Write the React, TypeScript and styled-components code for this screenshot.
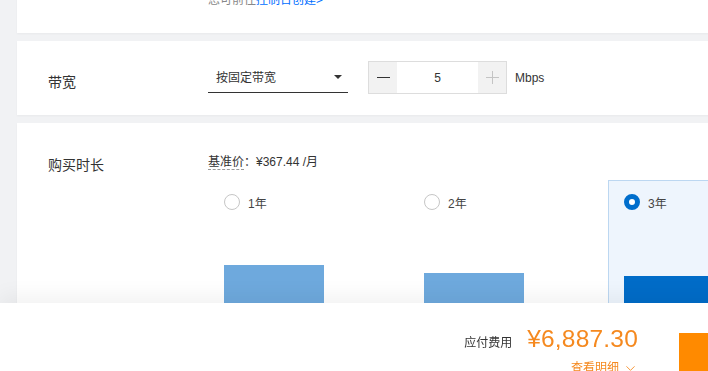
import React from 'react';
import styled, { createGlobalStyle } from 'styled-components';
import { ChevronDown } from 'lucide-react';

const GlobalStyle = createGlobalStyle`
  body {
    margin: 0;
    overflow: hidden;
    background: #f1f2f4;
    font-family: "Liberation Sans", "Noto Sans CJK SC", sans-serif;
    color: #333;
  }
`;

const durations = [
  { label: '1年', bar: 60, selected: false },
  { label: '2年', bar: 52, selected: false },
  { label: '3年', bar: 49, selected: true },
];

const App: React.FC = () => (
  <>
    <GlobalStyle />
    <Page>
      <Card>
        <Row>
          <Label />
          <Hint>
            您可前往<HintLink>控制台创建&gt;</HintLink>
          </Hint>
        </Row>
      </Card>

      <Card $padding="20px 0 21px">
        <Row>
          <Label $offset={11}>带宽</Label>
          <Controls>
            <Select>
              按固定带宽
              <Caret />
            </Select>
            <Stepper>
              <StepButton>
                <Minus />
              </StepButton>
              <StepValue>5</StepValue>
              <StepButton $disabled>
                <Plus />
              </StepButton>
            </Stepper>
            <Unit>Mbps</Unit>
          </Controls>
        </Row>
      </Card>

      <Card $padding="29px 0 0" $grow>
        <Row>
          <Label $offset={3}>购买时长</Label>
          <div>
            <BasePrice>
              <Dashed>基准价</Dashed>：¥367.44 /月
            </BasePrice>
            <Options>
              {durations.map((d) => (
                <Option key={d.label} $selected={d.selected}>
                  <RadioRow>
                    <Radio $checked={d.selected} />
                    {d.label}
                  </RadioRow>
                  <BarArea>
                    <Bar $selected={d.selected} style={{ height: d.bar }} />
                  </BarArea>
                </Option>
              ))}
            </Options>
          </div>
        </Row>
      </Card>
    </Page>

    <Footer>
      <PriceBlock>
        <PriceRow>
          <PriceLabel>应付费用</PriceLabel>
          <Price>¥6,887.30</Price>
        </PriceRow>
        <Detail>
          查看明细
          <ChevronDown size={15} strokeWidth={1.4} />
        </Detail>
      </PriceBlock>
      <BuyButton>立即购买</BuyButton>
    </Footer>
  </>
);

const Page = styled.div`
  width: 783px;
  height: 395px;
  margin-top: -10px;
  padding-left: 17px;
  display: flex;
  flex-direction: column;
  gap: 8px;
`;

const Card = styled.div<{ $padding?: string; $grow?: boolean }>`
  background: #fff;
  padding: ${({ $padding }) => $padding || '0 0 23px'};
  flex: ${({ $grow }) => ($grow ? 1 : 'none')};
  box-shadow: 0 1px 2px rgba(0, 0, 0, 0.04);
`;

const Row = styled.div`
  display: grid;
  grid-template-columns: 160px 1fr;
  padding-left: 31px;
`;

const Label = styled.div<{ $offset?: number }>`
  padding-top: ${({ $offset }) => $offset || 0}px;
  font-size: 14px;
  line-height: 20px;
  color: #333;
`;

const Hint = styled.div`
  font-size: 12px;
  line-height: 20px;
  color: #888;
`;

const HintLink = styled.span`
  color: #006eff;
`;

const Controls = styled.div`
  display: flex;
  align-items: center;
`;

const Select = styled.div`
  position: relative;
  width: 132px;
  height: 32px;
  padding-left: 8px;
  display: flex;
  align-items: center;
  border-bottom: 1px solid #333;
  font-size: 12px;
  margin-top: -2px;
`;

const Caret = styled.span`
  position: absolute;
  right: 6px;
  top: 15px;
  width: 0;
  height: 0;
  border-left: 4px solid transparent;
  border-right: 4px solid transparent;
  border-top: 4px solid #333;
`;

const Stepper = styled.div`
  display: flex;
  height: 31px;
  margin-left: 20px;
  border: 1px solid #ddd;
`;

const StepButton = styled.div<{ $disabled?: boolean }>`
  width: 28px;
  display: flex;
  align-items: center;
  justify-content: center;
  background: #f2f2f2;
  color: ${({ $disabled }) => ($disabled ? '#c4c4c4' : '#333')};
`;

const Minus = styled.span`
  width: 13px;
  height: 1.5px;
  background: currentColor;
`;

const Plus = styled.span`
  position: relative;
  width: 13px;
  height: 1px;
  background: currentColor;

  &::after {
    content: '';
    position: absolute;
    left: 6px;
    top: -6px;
    width: 1px;
    height: 13px;
    background: currentColor;
  }
`;

const StepValue = styled.div`
  width: 81px;
  display: flex;
  align-items: center;
  justify-content: center;
  font-size: 12px;
  color: #333;
  background: #fff;
`;

const Unit = styled.span`
  margin-left: 8px;
  font-size: 12px;
  color: #333;
`;

const BasePrice = styled.div`
  font-size: 12px;
  line-height: 20px;
  color: #333;
`;

const Dashed = styled.span`
  border-bottom: 1px dashed #999;
`;

const Options = styled.div`
  display: flex;
  margin-top: 8px;
`;

const Option = styled.div<{ $selected?: boolean }>`
  width: 200px;
  box-sizing: border-box;
  padding: 13px 15px 40px;
  border: 1px solid ${({ $selected }) => ($selected ? '#bcd7f1' : 'transparent')};
  border-right: none;
  background: ${({ $selected }) => ($selected ? '#eef5fd' : 'transparent')};
  flex: ${({ $selected }) => ($selected ? 1 : 'none')};
`;

const RadioRow = styled.div`
  display: flex;
  align-items: center;
  gap: 8px;
  height: 16px;
  font-size: 12px;
  color: #444;
`;

const Radio = styled.span<{ $checked?: boolean }>`
  width: 16px;
  height: 16px;
  box-sizing: border-box;
  border-radius: 50%;
  border: ${({ $checked }) => ($checked ? '5px solid #006ecc' : '1px solid #c6c6c6')};
  background: #fff;
`;

const BarArea = styled.div`
  height: 100px;
  margin-top: 15px;
  display: flex;
  align-items: flex-end;
`;

const Bar = styled.div<{ $selected?: boolean }>`
  width: 100px;
  background: ${({ $selected }) => ($selected ? '#006cc8' : '#6ea9dd')};
`;

const Footer = styled.div`
  position: fixed;
  left: 0;
  bottom: 0;
  width: 800px;
  height: 68px;
  background: #fff;
  display: flex;
  justify-content: flex-end;
  align-items: flex-start;
  box-shadow: 0 -6px 22px rgba(0, 0, 0, 0.06);
`;

const PriceBlock = styled.div`
  margin-top: 21px;
  display: flex;
  flex-direction: column;
  align-items: flex-end;
`;

const PriceRow = styled.div`
  display: flex;
  align-items: baseline;
  height: 30px;
`;

const PriceLabel = styled.span`
  font-size: 12px;
  color: #333;
  margin-right: 15px;
`;

const Price = styled.span`
  font-size: 24.5px;
  line-height: 30px;
  letter-spacing: 0.2px;
  color: #f5891f;
`;

const Detail = styled.div`
  margin-top: 6px;
  display: flex;
  align-items: center;
  gap: 4px;
  font-size: 12px;
  line-height: 16px;
  color: #f5891f;
`;

const BuyButton = styled.div`
  margin: 30px 0 0 41px;
  width: 121px;
  height: 60px;
  background: #ff8a00;
  color: #fff;
  font-size: 14px;
  display: flex;
  align-items: center;
  justify-content: center;
`;

export default App;
